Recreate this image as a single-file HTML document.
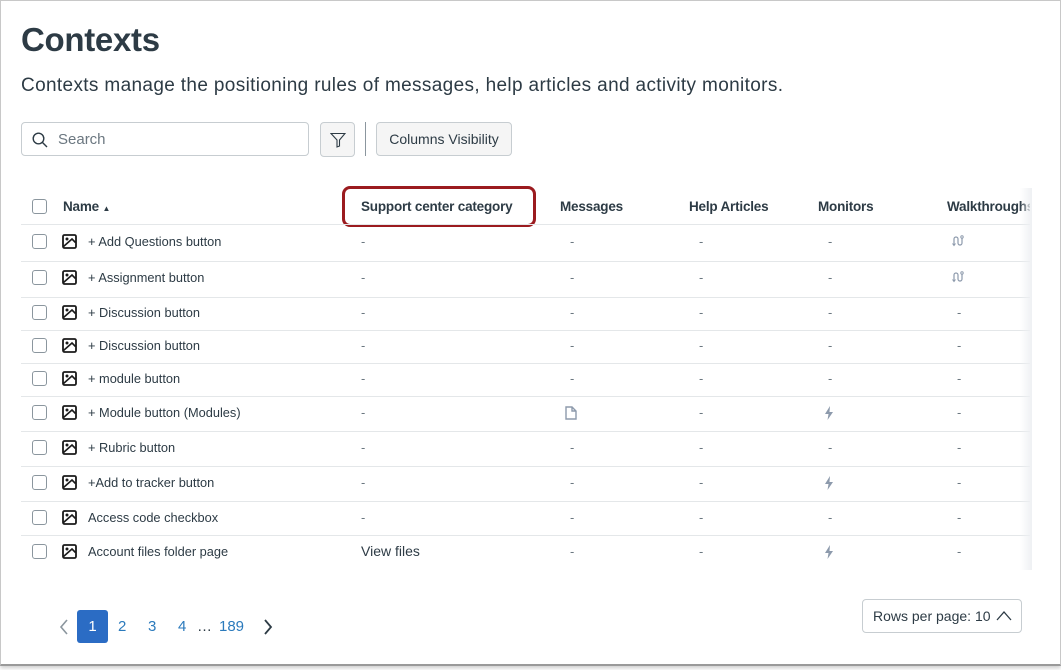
<!DOCTYPE html>
<html><head><style>
*{box-sizing:border-box;margin:0;padding:0}
body{width:1061px;height:670px;background:#fff;font-family:"Liberation Sans",sans-serif;color:#2d3b45;position:relative;overflow:hidden}
.frame{position:absolute;left:0;top:0;width:1061px;height:666px;border:1px solid #c8c8c8;border-bottom:2px solid #9a9a9a;box-shadow:0 2px 4px rgba(0,0,0,.2)}
h1{position:absolute;left:21px;top:21px;font-size:33px;font-weight:bold;color:#2d3b45;letter-spacing:-0.3px}
.sub{position:absolute;left:21px;top:75px;font-size:19px;color:#2d3b45;letter-spacing:0.35px}
.search{position:absolute;left:21px;top:122px;width:288px;height:34px;border:1px solid #c7cdd1;border-radius:4px}
.search span{position:absolute;left:36px;top:8px;font-size:15px;color:#6b7780}
.fbtn{position:absolute;left:320px;top:122px;width:35px;height:35px;border:1px solid #c7cdd1;border-radius:4px;background:#f5f5f5}
.vsep{position:absolute;left:365px;top:122px;width:1px;height:34px;background:#8b969e}
.cbtn{position:absolute;left:376px;top:122px;width:136px;height:34px;border:1px solid #c7cdd1;border-radius:4px;background:#f5f5f5;font-size:14px;text-align:center;line-height:32px}
.th{position:absolute;top:199px;font-size:13.5px;font-weight:bold;color:#2d3b45;letter-spacing:-0.2px}
.cb{position:absolute;left:32px;width:15px;height:15px;border:1px solid #8b969e;border-radius:3px}
.line{position:absolute;left:21px;width:1009px;height:1px;background:#e4e7e9}
.row{position:absolute;left:0;width:1030px;font-size:12.8px;color:#2d3b45}
.row .t{position:absolute;top:-8px}
.red{position:absolute;left:342px;top:186px;width:194px;height:41px;border:3px solid #9b1b1f;border-radius:8px}
.fade{position:absolute;left:1020px;top:188px;width:12px;height:382px;background:linear-gradient(90deg,rgba(255,255,255,0),#eef0f3)}
.pg{position:absolute;top:618px;font-size:15px;color:#2b7abc}
.rpp{position:absolute;left:862px;top:599px;width:160px;height:34px;border:1px solid #c7cdd1;border-radius:4px;font-size:14px;line-height:32px;padding-left:10px}
</style></head><body>
<div class="frame"></div>
<h1>Contexts</h1>
<div class="sub">Contexts manage the positioning rules of messages, help articles and activity monitors.</div>
<div class="search"><svg style="position:absolute;left:10px;top:9px" width="16" height="16" viewBox="0 0 16 16"><circle cx="6.5" cy="6.5" r="5.3" fill="none" stroke="#2d3b45" stroke-width="1.4"/><path d="M10.5 10.5L15 15" stroke="#2d3b45" stroke-width="1.4"/></svg><span>Search</span></div>
<div class="fbtn"><svg style="position:absolute;left:9px;top:9px" width="16" height="16" viewBox="0 0 16 16"><path d="M1 1.5h14L9.5 8v6L7 15V8z" fill="none" stroke="#2d3b45" stroke-width="1.1"/></svg></div>
<div class="vsep"></div>
<div class="cbtn">Columns Visibility</div>
<div class="cb" style="top:199px"></div>
<div class="th" style="left:63px">Name <span style="font-size:8px">▲</span></div>
<div class="th" style="left:361px">Support center category</div>
<div class="th" style="left:560px">Messages</div>
<div class="th" style="left:689px">Help Articles</div>
<div class="th" style="left:818px">Monitors</div>
<div class="th" style="left:947px;width:83px;overflow:hidden;white-space:nowrap">Walkthroughs</div>
<div class="red"></div>
<div id="rows"></div>
<div class="fade"></div>
<svg class="pg" style="left:58px;top:619px" width="12" height="16" viewBox="0 0 12 16"><path d="M9 1L3 8l6 7" fill="none" stroke="#8b969e" stroke-width="1.6"/></svg>
<div style="position:absolute;left:77px;top:610px;width:31px;height:33px;background:#2b6cc4;border-radius:3px;color:#fff;font-size:15px;text-align:center;line-height:33px">1</div>
<div class="pg" style="left:118px">2</div><div class="pg" style="left:148px">3</div><div class="pg" style="left:178px">4</div>
<div class="pg" style="left:197px;color:#2d3b45">…</div><div class="pg" style="left:219px">189</div>
<svg style="position:absolute;left:262px;top:619px" width="12" height="16" viewBox="0 0 12 16"><path d="M3 1l6 7-6 7" fill="none" stroke="#2d3b45" stroke-width="1.8"/></svg>
<div class="rpp">Rows per page: 10 <svg style="position:absolute;left:133px;top:10px" width="16" height="12" viewBox="0 0 16 12"><path d="M1 10l7-8 7 8" fill="none" stroke="#2d3b45" stroke-width="1.3"/></svg></div>
<script>
var R=[["+ Add Questions button","-","-","-","-","w",242],["+ Assignment button","-","-","-","-","w",278],["+ Discussion button","-","-","-","-","-",313],["+ Discussion button","-","-","-","-","-",346],["+ module button","-","-","-","-","-",379],["+ Module button (Modules)","-","d","-","b","-",413],["+ Rubric button","-","-","-","-","-",448],["+Add to tracker button","-","-","-","b","-",483],["Access code checkbox","-","-","-","-","-",518],["Account files folder page","View files","-","-","b","-",552]];
var L=[224,261,297,330,363,396,431,466,501,535];
var img='<svg width="15" height="15" viewBox="0 0 15 15"><rect x="1" y="1" width="13" height="13" rx="1.5" fill="none" stroke="#1a1a1a" stroke-width="1.8"/><circle cx="5" cy="5" r="1.5" fill="#1a1a1a"/><path d="M1.5 12.5L10 5l3.5 3.5" fill="none" stroke="#1a1a1a" stroke-width="1.6"/></svg>';
var W='<svg width="14" height="12" viewBox="0 0 14 12"><path d="M2 10V4a2 2 0 014 0v4a2 2 0 004 0V3" fill="none" stroke="#8d9aac" stroke-width="1.2"/><circle cx="10" cy="2" r="1.2" fill="none" stroke="#8d9aac"/><path d="M0.5 8.5L2 10.5 3.5 8.5" fill="none" stroke="#8d9aac"/></svg>';
var D='<svg width="12" height="14" viewBox="0 0 12 14"><path d="M1 1h6l4 4v8H1z M7 1v4h4" fill="none" stroke="#8d9aac" stroke-width="1.4"/></svg>';
var B='<svg width="10" height="14" viewBox="0 0 10 14"><path d="M6 0L1 8h3.5L3.5 14 9 6H5.5z" fill="#8d9aac"/></svg>';
function c(v,x,y){if(v=="-")return '<div class="t" style="left:'+x+'px;color:#6b7780">-</div>';if(v=="w")return '<div style="position:absolute;left:'+(x-5)+'px;top:-7px">'+W+'</div>';if(v=="d")return '<div style="position:absolute;left:'+(x-5)+'px;top:-7px">'+D+'</div>';if(v=="b")return '<div style="position:absolute;left:'+(x-4)+'px;top:-7px">'+B+'</div>';return '<div class="t" style="left:'+x+'px;font-size:14px;top:-9px">'+v+'</div>';}
var h='';L.forEach(function(y){h+='<div class="line" style="top:'+y+'px"></div>'});
R.forEach(function(r){var y=r[6];h+='<div class="cb" style="top:'+(y-8)+'px"></div><div class="row" style="top:'+y+'px"><div style="position:absolute;left:62px;top:-8px">'+img+'</div><div class="t" style="left:88px">'+r[0]+'</div>'+(r[1]=="-"?c("-",361):c(r[1],361))+c(r[2],570)+c(r[3],699)+c(r[4],828)+c(r[5],957)+'</div>'});
document.getElementById('rows').innerHTML=h;
</script>
</body></html>
